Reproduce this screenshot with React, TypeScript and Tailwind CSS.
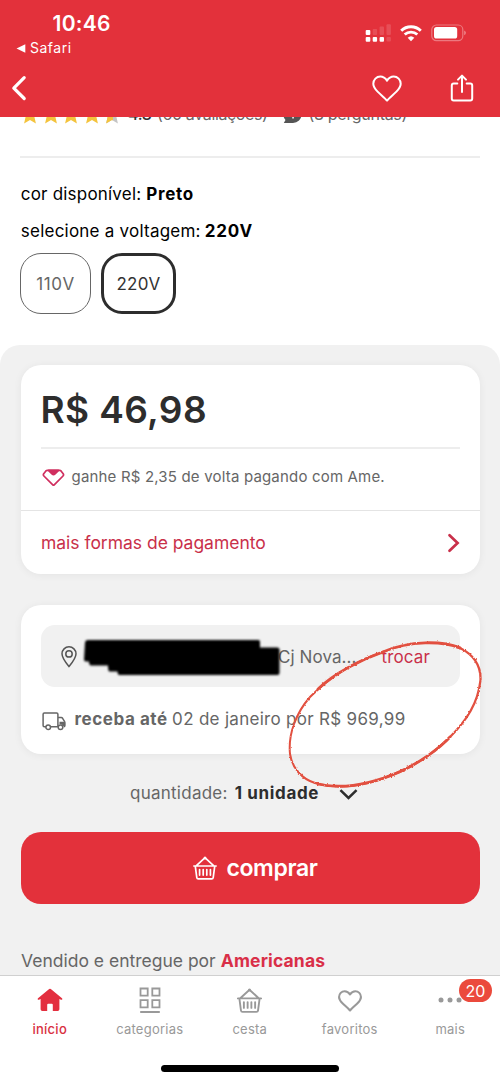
import type { ReactNode } from "react";

function StatusBar() {
  return (
    <div className="flex h-[60px] justify-between">
      <div className="flex w-[120px] flex-col">
        <span className="mt-3 pl-[52.500px] text-[21px] leading-[23px] font-semibold tracking-[0.3px]">10:46</span>
        <div className="mt-[3px] flex h-5 items-center gap-[4px] pl-4">
          <svg width="10" height="9" viewBox="0 0 10 9" fill="white"><path d="M0.5 4.5 9.3.3v8.4z" /></svg>
          <span className="text-[14px] leading-5 tracking-[0.5px]">Safari</span>
        </div>
      </div>
      <div className="mt-[22px] mr-[34px] flex h-[22px] items-center gap-[9px]">
        <svg width="26" height="18" viewBox="0 0 26 18" fill="white">
          <rect x="0.7" y="6" width="4.6" height="5" rx="1" />
          <g opacity="0.14">
            <rect x="7.7" y="5" width="4.4" height="6" rx="1" />
            <rect x="14.6" y="2.5" width="4.4" height="8.5" rx="1" />
            <rect x="21.5" y="0.3" width="4.4" height="10.7" rx="1" />
            <rect x="21.5" y="13" width="4.4" height="4.6" rx="1" />
          </g>
          <rect x="0.7" y="13" width="4.6" height="4.8" rx="1" />
          <rect x="7.7" y="13" width="4.4" height="4.8" rx="1" />
          <rect x="14.6" y="13" width="4.4" height="4.8" rx="1" />
        </svg>
        <svg width="22" height="17" viewBox="0 0 22 17" fill="none" stroke="white">
          <path d="M1.2 5.7a14 14 0 0 1 19.6 0" strokeWidth="2.9" />
          <path d="M4.7 9.6a9 9 0 0 1 12.6 0" strokeWidth="2.8" />
          <path d="M11 16.2 7.7 12.8a4.8 4.8 0 0 1 6.6 0z" fill="white" stroke="none" />
        </svg>
        <svg width="35" height="18" viewBox="0 0 35 18" fill="none">
          <rect x="0.8" y="1" width="31" height="15.6" rx="4.6" stroke="white" strokeOpacity="0.35" strokeWidth="1.2" />
          <rect x="3" y="3.1" width="23.2" height="11.4" rx="2.6" fill="white" />
          <path d="M33.2 6.4q1.7.8 1.7 2.4t-1.7 2.4z" fill="white" fillOpacity="0.4" />
        </svg>
      </div>
    </div>
  );
}

function Heart({ size, stroke }: { size: number; stroke: number }) {
  return (
    <svg width={size} height={size * 0.9} viewBox="0 0 30 27" fill="none" stroke="currentColor" strokeWidth={stroke} strokeLinejoin="round">
      <path d="M15 25.6C13 23.2 8.600 19.600 5.600 16.600 3.400 14.400 1.300 12.200 1.300 8.800 1.300 4.700 4.500 1.500 8.300 1.500c2.800 0 4.900 1.300 6.700 4.100 1.800-2.800 3.900-4.100 6.700-4.100 3.800 0 7 3.200 7 7.300 0 3.400-2.100 5.600-4.300 7.800C21.400 19.600 17 23.200 15 25.600z" />
    </svg>
  );
}

function Basket({ size, stroke }: { size: number; stroke: number }) {
  return (
    <svg width={size} height={size} viewBox="0 0 24 24" fill="none" stroke="currentColor" strokeWidth={stroke} strokeLinecap="round" strokeLinejoin="round">
      <path d="M.8 10h22.400M2.300 10.300l1.500 11.300q.2 1.300 1.500 1.300h13.400q1.300 0 1.500-1.300l1.500-11.300M3.400 9.600 11 2.600M20.600 9.600 13 2.600" />
      <path d="M6.600 13.500v5.600M10.200 13.500v5.600M13.800 13.500v5.600M17.400 13.500v5.600" />
      <circle cx="12" cy="1.900" r="1.500" fill="currentColor" stroke="none" />
    </svg>
  );
}

function Star({ partial }: { partial?: boolean }) {
  const d = "M10 0.500l2.700 6.200 6.700.6-5 4.500 1.500 6.700L10 15l-5.900 3.500 1.500-6.700-5-4.500 6.700-.6z";
  return (
    <svg width="20" height="19" viewBox="0 0 20 19">
      <path d={d} fill={partial ? "#c4c4c4" : "#f4c33c"} />
      {partial && <path d={d} fill="#f4c33c" className="[clip-path:inset(0_45%_0_0)]" />}
    </svg>
  );
}

function Tab({ icon, label, width, active, badge }: { icon: ReactNode; label: string; width: string; active?: boolean; badge?: string }) {
  return (
    <div className={`relative flex flex-col items-center ${width} ${active ? "text-[#d92f3f]" : "text-[#999]"}`}>
      <div className="mt-[10px] flex h-7 items-center justify-center">{icon}</div>
      <span className={`mt-[5px] pl-[0.500px] text-[13px] leading-5 tracking-[0.250px] ${active ? "font-medium" : ""}`}>{label}</span>
      {badge && (
        <span className="absolute top-[3px] left-[59px] flex h-[23px] w-[33px] items-center justify-center rounded-full bg-[#eb4a3c] text-[16px] text-white">{badge}</span>
      )}
    </div>
  );
}

function PenCircle() {
  return (
    <svg className="pointer-events-none absolute top-0 left-0" width="500" height="1082" viewBox="0 0 500 1082" fill="none" stroke="#e2503f" strokeLinecap="round" strokeLinejoin="round">
      <filter id="chalk" x="-5%" y="-5%" width="110%" height="110%">
        <feTurbulence type="fractalNoise" baseFrequency="0.45" numOctaves="2" seed="4" />
        <feDisplacementMap in="SourceGraphic" scale="2.400" xChannelSelector="R" yChannelSelector="G" />
      </filter>
      <g filter="url(#chalk)">
        <path d="M383 652C353 662 329 678 310 697C296 713 288 734 290 754C292 768 302 779 315 783" strokeWidth="2" />
        <path d="M315 783C342 791 373 784 400 772C420 763 436 751 450 737C467 720 478 703 480.500 680C481 665 474 655 460 648" strokeWidth="2.300" />
        <path d="M460 648C443 641 410 640 383 652" strokeWidth="3" />
        <path d="M383 652C360 660 333 674 318 689M318 784C345 790 374 783 400 771.500C420 762.500 440 748 450 737" strokeWidth="2.700" />
      </g>
    </svg>
  );
}

export default function App() {
  return (
    <div className="relative flex h-[1082px] w-[500px] flex-col overflow-hidden bg-white font-['Inter',sans-serif] text-black">
      <header className="h-[117px] shrink-0 bg-[#e3313b] text-white">
        <StatusBar />
        <div className="flex h-[56px] items-center pl-[11px]">
          <svg width="17" height="26" viewBox="0 0 17 26" fill="none" stroke="white" strokeWidth="3.200" strokeLinecap="round" strokeLinejoin="round"><path d="M13.200 2.700 2.800 13.200 13.200 23.500" /></svg>
          <div className="ml-[344px]"><Heart size={30} stroke={2} /></div>
          <svg className="ml-[48px]" width="24" height="28" viewBox="0 0 24 28" fill="none" stroke="white" strokeWidth="2" strokeLinecap="round" strokeLinejoin="round">
            <path d="M7.300 9.500H3.700q-1.900 0-1.900 1.900v13.200q0 1.900 1.900 1.900h16.600q1.900 0 1.900-1.900V11.400q0-1.900-1.900-1.900h-3.600" />
            <path d="M12 18V2M8 5.600l4-4 4 4" />
          </svg>
        </div>
      </header>

      <div className="mx-5 h-[41px] shrink-0 overflow-hidden border-b-2 border-[#ededed]">
        <div className="-mt-[13px] flex h-5 items-center text-[16px] text-[#666]">
          <div className="flex gap-[0.500px]"><Star /><Star /><Star /><Star /><Star partial /></div>
          <span className="ml-[6px] w-[23.500px] font-medium tracking-[-0.330px] text-[#333]">4.8</span>
          <span className="ml-[5.500px] tracking-[-0.370px]">(60 avaliações)</span>
          <svg className="ml-[15px]" width="19" height="19" viewBox="0 0 19 19"><path d="M10 1a8.500 8.500 0 0 1 0 17H.8l1.700-3A8.500 8.500 0 0 1 10 1z" fill="#555" /><path d="M9.300 12h1.500v1.600H9.300z" fill="white" /></svg>
          <span className="ml-[7px] tracking-[-0.300px]">(8 perguntas)</span>
        </div>
      </div>

      <section className="flex h-[187px] shrink-0 flex-col px-5 pt-[25px] text-[17px]">
        <p className="flex h-6 items-center gap-[5px] pl-[0.800px]"><span className="tracking-[0.200px]">cor disponível:</span><b className="tracking-[0.700px]">Preto</b></p>
        <p className="mt-[13px] flex h-6 items-center gap-[4px] pl-[0.800px]"><span className="tracking-[0.230px]">selecione a voltagem:</span><b className="tracking-[0.750px]">220V</b></p>
        <div className="mt-[9px] flex gap-[10px]">
          <button className="h-[61px] w-[71px] rounded-[21px] border border-[#666] pt-[2px] tracking-[0.600px] text-[#666]">110V</button>
          <button className="h-[61px] w-[75px] rounded-[21px] border-[3px] border-[#2d2d2d] pt-[2px] tracking-[0.300px] text-[#333]">220V</button>
        </div>
      </section>

      <main className="h-[630px] shrink-0 overflow-hidden rounded-t-[20px] bg-[#f1f1f1] px-[20.500px] pt-5 text-[#666]">
        <section className="h-[209px] rounded-[20px] bg-white shadow-[0_1px_8px_rgba(0,0,0,0.06)]">
          <div className="mx-5 flex h-[84px] items-center border-b-2 border-[#ededed] pt-[7px]">
            <span className="text-[37px] font-semibold tracking-[0.380px] text-[#2d2d2d]">R$ 46,98</span>
          </div>
          <div className="flex h-[62px] items-center border-b border-[#e4e4e4] pr-5 pb-[4px] pl-[21px]">
            <svg width="23" height="18" viewBox="0 0 23 18" fill="none" stroke="#d02f5f" strokeWidth="1.700" strokeLinejoin="round">
              <path d="M5.300 1.300h12.400q.8 0 1.300.6l2.200 2.900q.8 1.200-.2 2.200L12.200 15.800q-.7.700-1.400 0L1.900 7q-1-1-.2-2.200L3.900 1.900q.6-.6 1.400-.6z" />
              <path d="M6.500 1.300h10L13 5q-1.500 1.400-3 0z" fill="#d02f5f" />
            </svg>
            <span className="ml-[7px] text-[15px] tracking-[0.180px]">ganhe R$ 2,35 de volta pagando com Ame.</span>
          </div>
          <div className="flex h-[63px] items-center justify-between pr-[20px] pl-[20.500px]">
            <span className="pt-[2px] text-[17.500px] tracking-[-0.020px] text-[#c9304a]">mais formas de pagamento</span>
            <svg width="13" height="20" viewBox="0 0 13 20" fill="none" stroke="#c9304a" strokeWidth="2.700" strokeLinecap="round"><path d="M2.500 2.200 10.600 10l-8.100 7.800" /></svg>
          </div>
        </section>

        <section className="mt-[31px] h-[149px] rounded-[20px] bg-white px-5 pt-5 shadow-[0_1px_8px_rgba(0,0,0,0.06)]">
          <div className="flex h-[62px] items-center rounded-[14px] bg-[#f1f1f1] pl-[20px] text-[17px]">
            <svg className="mt-px" width="16" height="22" viewBox="0 0 16 22" fill="none" stroke="#555" strokeWidth="1.500" strokeLinejoin="round"><path d="M8 20.600C5.500 17.500 1 12.200 1 7.800a7 7 0 0 1 14 0c0 4.400-4.500 9.700-7 12.800z" /><circle cx="8" cy="7.900" r="3.200" /></svg>
            <svg className="ml-[6px] overflow-visible blur-[0.900px]" width="198" height="38" viewBox="0 0 198 38"><path d="M4.500 3h171q1.500 0 1.500 2v5.500H194q2.500 0 2.500 2v23.500q0 2-2 2H36.500q-2 0-2-3.500h-8q-1.500 0-1.500-6H8q-2 0-2-4H3q-2 0-2-2l1-17q.2-2.500 2.500-2.500z" fill="black" /></svg>
            <span className="-ml-[2.500px] pt-[3px] tracking-[0.080px]">Cj Nova...</span>
            <span className="ml-[25px] pt-[3px] tracking-[0.150px] text-[#c9304a]">trocar</span>
          </div>
          <div className="mt-[21px] flex h-6 items-center text-[17px]">
            <svg className="mt-[3px] ml-[1px]" width="24" height="19" viewBox="0 0 24 19" fill="none" stroke="#666" strokeWidth="1.500" strokeLinejoin="round">
              <path d="M4 14.800H2.300q-1.200 0-1.200-1.200V2.300q0-1.200 1.200-1.200h12.400q1.200 0 1.200 1.200v12.500H8.500M16 5.600h3.300q.8 0 1.300.7l1.900 3q.4.600.4 1.400v2.900q0 1.200-1.200 1.200" />
              <path d="M17.500 9.800h4.700l.8 1v3.500h-1.500q-1-2.300-4-2z" fill="#666" stroke="none" />
              <circle cx="6.200" cy="15.200" r="2.300" /><circle cx="18.500" cy="15.200" r="2.300" />
            </svg>
            <b className="ml-[9px] tracking-[0.550px]">receba até</b>
            <span className="ml-[4.500px] tracking-[0.300px]">02 de janeiro por R$ 969,99</span>
          </div>
        </section>

        <div className="mt-[28px] flex h-6 items-center pl-[109.500px] text-[17px]">
          <span className="tracking-[0.250px]">quantidade:</span>
          <b className="ml-[7px] tracking-[0.650px] text-[#2d2d2d]">1 unidade</b>
          <svg className="mt-[1px] ml-[19.500px]" width="19" height="11" viewBox="0 0 20 12" fill="none" stroke="#2d2d2d" strokeWidth="2.700"><path d="M1.200 1.200 10 9.800l8.800-8.600" /></svg>
        </div>

        <button className="mt-[26px] flex h-[72px] w-full items-center justify-center rounded-[20px] bg-[#e3313b] pl-[11px] text-white">
          <Basket size={24} stroke={1.7} />
          <span className="ml-[9px] text-[23px] font-semibold tracking-[-0.370px]">comprar</span>
        </button>
        <p className="mt-[45px] flex h-6 items-center gap-[5px] pl-[0.500px] text-[17.500px]"><span>Vendido e entregue por</span><b className="tracking-[0.150px] text-[#d92f48]">Americanas</b></p>
      </main>

      <nav className="flex h-[107px] shrink-0 flex-col border-t border-[#d0d0d0] bg-white">
        <div className="flex h-[88px]">
          <Tab width="w-[99px]" active label="início" icon={
            <svg width="26" height="24" viewBox="0 0 26 24" fill="#e32f3f"><path d="M12.200 1q.8-.7 1.600 0L25 10.300q.7.700.2 1.200-.5.400-1.200.2l-1.600-.6v10.200q0 1.700-1.700 1.700h-4.900v-6.300q0-1-1-1h-3.600q-1 0-1 1V23H5.300q-1.700 0-1.700-1.700V11.100l-1.600.6q-.7.200-1.200-.2-.5-.5.200-1.200z" /></svg>
          } />
          <Tab width="w-[101px]" label="categorias" icon={
            <svg className="-mt-[1px]" width="22" height="28" viewBox="0 0 22 28" fill="none" stroke="currentColor" strokeWidth="1.800"><path d="M1.500 2.500h7.200v7.200H1.500zM13.300 2.500h7.200v7.200h-7.200zM1.500 14.200h7.200v7.200H1.500zM13.300 14.200h7.200v7.200h-7.200zM1.200 26h19.600" /></svg>
          } />
          <Tab width="w-[99px]" label="cesta" icon={<Basket size={25} stroke={1.8} />} />
          <Tab width="w-[101px]" label="favoritos" icon={<div className="pt-[2px]"><Heart size={24} stroke={2.6} /></div>} />
          <Tab width="w-[100px]" label="mais" badge="20" icon={
            <svg width="24" height="6" viewBox="0 0 24 6" fill="currentColor"><circle cx="3" cy="3" r="2.500" /><circle cx="12" cy="3" r="2.500" /><circle cx="21" cy="3" r="2.500" /></svg>
          } />
        </div>
        <div className="mt-[1px] ml-[161px] h-[7px] w-[178px] rounded-full bg-black" />
      </nav>

      <PenCircle />
    </div>
  );
}
